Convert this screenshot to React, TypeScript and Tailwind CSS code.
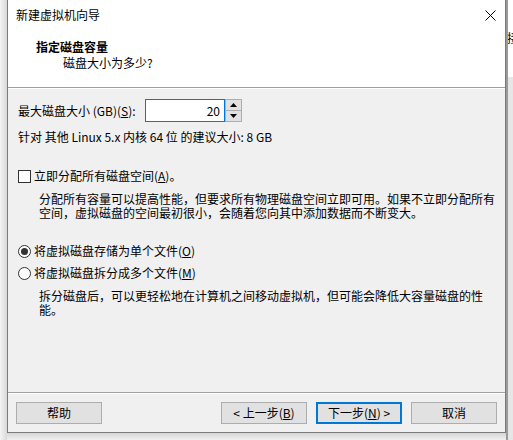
import React from "react";

const font = { fontFamily: '"Noto Sans CJK SC", sans-serif' };

function Btn({ children, primary }: { children: React.ReactNode; primary?: boolean }) {
  return (
    <div
      className={
        "w-[86px] h-[22px] flex items-center justify-center text-[12px] leading-none text-black bg-[#e1e1e1] " +
        (primary ? "border-2 border-[#0078d7]" : "border border-[#adadad]")
      }
    >
      {children}
    </div>
  );
}

export default function App() {
  return (
    <div className="w-[513px] h-[440px] flex bg-[#e4e4e4] overflow-hidden" style={font}>
      <div className="w-[7px] h-full bg-gradient-to-r from-[#f4f4f4] to-[#d9d9d9]" />
      <div className="flex flex-col w-[499px]">
        <div className="w-[499px] h-[433px] flex flex-col border-l border-r border-b border-[#7a7a7a] bg-[#f0f0f0] text-[12px] text-black">
          {/* title bar */}
          <div className="h-[30px] bg-white flex items-center justify-between pl-[8px] pr-[9px]">
            <span className="leading-none">新建虚拟机向导</span>
            <svg width="11" height="11" viewBox="0 0 11 11">
              <path d="M0.5 0.5 L10.5 10.5 M10.5 0.5 L0.5 10.5" stroke="#000" strokeWidth="1" />
            </svg>
          </div>
          {/* header */}
          <div className="h-[58px] bg-white border-b border-[#a0a0a0] flex flex-col">
            <div className="h-[16px] mt-[9px] pl-[28px] flex items-center font-bold leading-none">指定磁盘容量</div>
            <div className="h-[16px] pl-[55px] flex items-center leading-none">磁盘大小为多少?</div>
          </div>
          {/* body */}
          <div className="flex-1 flex flex-col pl-[10px] border-t border-white">
            <div className="mt-[10px] h-[23px] flex items-center">
              <span className="w-[127px] leading-none">
                最大磁盘大小 (GB)(<u>S</u>):
              </span>
              <div className="w-[80px] h-[23px] bg-white border border-[#0078d7] flex items-center justify-end pr-[4px] leading-none">
                20
              </div>
              <div className="w-[17px] h-[23px] border border-[#adadad] bg-[#f0f0f0] flex flex-col">
                <div className="flex-1 flex items-center justify-center bg-[#e1e1e1] border-b border-[#adadad]">
                  <svg width="7" height="4" viewBox="0 0 7 4">
                    <path d="M3.5 0 L7 4 L0 4 Z" fill="#000" />
                  </svg>
                </div>
                <div className="flex-1 flex items-center justify-center bg-[#e1e1e1]">
                  <svg width="7" height="4" viewBox="0 0 7 4">
                    <path d="M0 0 L7 0 L3.5 4 Z" fill="#000" />
                  </svg>
                </div>
              </div>
            </div>
            <div className="mt-[7px] h-[16px] flex items-center leading-none">
              针对 其他 Linux 5.x 内核 64 位 的建议大小: 8 GB
            </div>
            <div className="mt-[23px] h-[16px] flex items-center">
              <div className="w-[13px] h-[13px] border border-[#333] bg-white mr-[3px]" />
              <span className="leading-none">
                立即分配所有磁盘空间(<u>A</u>)。
              </span>
            </div>
            <div className="mt-[8px] ml-[21px] leading-[14px] whitespace-nowrap">
              分配所有容量可以提高性能，但要求所有物理磁盘空间立即可用。如果不立即分配所有
              <br />
              空间，虚拟磁盘的空间最初很小，会随着您向其中添加数据而不断变大。
            </div>
            <div className="mt-[23px] h-[16px] flex items-center">
              <div className="w-[13px] h-[13px] rounded-full border border-[#333] bg-white mr-[3px] flex items-center justify-center">
                <div className="w-[7px] h-[7px] rounded-full bg-[#333]" />
              </div>
              <span className="leading-none">
                将虚拟磁盘存储为单个文件(<u>O</u>)
              </span>
            </div>
            <div className="mt-[6px] h-[16px] flex items-center">
              <div className="w-[13px] h-[13px] rounded-full border border-[#333] bg-white mr-[3px]" />
              <span className="leading-none">
                将虚拟磁盘拆分成多个文件(<u>M</u>)
              </span>
            </div>
            <div className="mt-[8px] ml-[21px] leading-[14px] whitespace-nowrap">
              拆分磁盘后，可以更轻松地在计算机之间移动虚拟机，但可能会降低大容量磁盘的性
              <br />
              能。
            </div>
          </div>
          {/* footer */}
          <div className="border-t border-[#a0a0a0]">
            <div className="border-t border-white h-[39px] flex justify-between px-[8px] pt-[8px]">
              <Btn>帮助</Btn>
              <div className="flex gap-[9px]">
                <Btn>
                  &lt; 上一步(<u>B</u>)
                </Btn>
                <Btn primary>
                  下一步(<u>N</u>) &gt;
                </Btn>
                <Btn>取消</Btn>
              </div>
            </div>
          </div>
        </div>
        <div className="flex-1 bg-gradient-to-b from-[#d5d5d5] to-[#f0f0f0]" />
      </div>
      <div className="w-[7px] h-full flex flex-col border-l-2 border-[#9a9a9a]">
        <div className="h-[77px] bg-white overflow-hidden relative">
          <span className="absolute left-[-1px] top-[32px] text-[12px] leading-none text-black">接</span>
        </div>
        <div className="flex-1 bg-[#e6e6e6]" />
      </div>
    </div>
  );
}
